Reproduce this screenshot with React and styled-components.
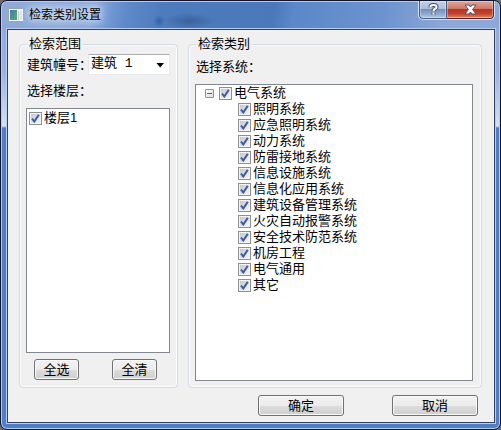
import { useState } from "react";
import styled, { createGlobalStyle } from "styled-components";

const GlobalStyle = createGlobalStyle`
  body {
    margin: 0;
    background: #6b6b70;
    font: 13px/16px "Liberation Sans", "Noto Sans CJK SC", sans-serif;
    color: #000;
  }
  * {
    box-sizing: border-box;
  }
`;

const Window = styled.main`
  min-height: 100vh;
  display: flex;
  flex-direction: column;
  padding: 0 5px 6px 6px;
  border: 1px solid #10142c;
  border-radius: 7px;
  background:
    radial-gradient(6px 6px at 158px 20px, rgba(38, 88, 160, 0.7), transparent) top / 100% 28px no-repeat,
    radial-gradient(26px 8px at 188px 20px, rgba(48, 84, 140, 0.65), transparent) top / 100% 28px no-repeat,
    linear-gradient(100deg, #8fa9d8 0, #8aa8da 90px, #5f8aca 125px, #4d7cbe 160px, #4a78b8 270px, #5b88c8 290px, #6d93cf 380px, #8ba8d8 440px, #8ba8d8 100%) top / 100% 28px no-repeat,
    linear-gradient(#8ca8d8 0, #9bb2de 70px, #d5e0f2 125px, #4f80c6 127px, #4f80c6 100%);
  box-shadow: inset 0 0 0 1px #b4cdee;
`;

const TitleBar = styled.header`
  height: 28px;
  display: flex;
  align-items: flex-start;
  justify-content: space-between;
  padding-left: 1px;
`;

const Title = styled.h1`
  display: flex;
  align-items: center;
  gap: 5px;
  height: 28px;
  margin: 0;
  font-size: 12px;
  font-weight: 400;
  text-shadow: 0 0 6px #e8effa, 0 0 10px #dde8f8, 0 0 14px #dde8f8;
`;

const WindowButtons = styled.div`
  display: flex;
  border: 1px solid #d4e2f4;
  border-top: 0;
  border-radius: 0 0 5px 5px;
  overflow: hidden;
`;

const WindowButton = styled.button`
  display: flex;
  align-items: center;
  justify-content: center;
  width: ${(p) => (p.$close ? "47px" : "28px")};
  height: 18px;
  padding: 0;
  border: 1px solid ${(p) => (p.$close ? "#5a1f26" : "#46597c")};
  border-top: 0;
  border-left-width: ${(p) => (p.$close ? "0" : "1px")};
  border-radius: ${(p) => (p.$close ? "0 0 4px 0" : "0 0 0 4px")};
  background: ${(p) =>
    p.$close
      ? "linear-gradient(#e0a79c 0, #cf7867 45%, #b73523 50%, #c2452e 75%, #dc8863 100%)"
      : "linear-gradient(#c3d2e9 0, #a9bddd 45%, #7590be 50%, #8ca7d0 75%, #b3c9e8 100%)"};
  box-shadow: inset 0 0 0 1px rgba(255, 255, 255, 0.35);
`;

const Client = styled.form`
  flex: 1;
  display: flex;
  flex-direction: column;
  padding: 6px 12px 6px 11px;
  border: 1px solid #34425f;
  background: #f0f0f0;
  box-shadow: 0 0 0 1px #b4cdee;
`;

const Groups = styled.div`
  flex: 1;
  display: grid;
  grid-template-columns: 159px 1fr;
  gap: 10px;
`;

const Group = styled.fieldset`
  display: flex;
  flex-direction: column;
  min-width: 0;
  margin: 0;
  padding: ${(p) => p.$padding};
  border: 1px solid #d0dce6;
  border-radius: 4px;
  box-shadow: inset 0 0 0 1px #fbfcfd;
`;

const Legend = styled.legend`
  margin-left: 1px;
  padding: 0 2px;
  background: #f0f0f0;
`;

const Field = styled.div`
  display: flex;
  align-items: center;
  margin-bottom: 8px;
`;

const Label = styled.label`
  width: 62px;
  padding-left: 1px;
  white-space: nowrap;
`;

const ListTitle = styled.div`
  margin-bottom: 9px;
  padding-left: 1px;
`;

const Combo = styled.div`
  position: relative;
  flex: 1;
  svg {
    position: absolute;
    right: 5px;
    top: 9px;
    pointer-events: none;
  }
`;

const Select = styled.select`
  display: block;
  width: 100%;
  height: 21px;
  padding: 0 16px 2px 2px;
  border: 1px solid #e3e9ef;
  border-top-color: #abadb3;
  border-radius: 1px;
  background: #fff;
  color: #000;
  font: 13px/16px "Liberation Mono", "Noto Sans CJK SC", monospace;
  appearance: none;
`;

const ListBox = styled.ul`
  flex: 1;
  margin: 0;
  padding: ${(p) => p.$padding};
  list-style: none;
  border: 1px solid #828790;
  background: #fff;
`;

const SubList = styled.ul`
  margin: 0;
  padding: 0 0 0 40px;
  list-style: none;
`;

const Row = styled.div`
  display: flex;
  align-items: center;
  gap: 5px;
  padding-left: 7px;
`;

const CheckLabel = styled.label`
  display: flex;
  align-items: center;
  gap: 2px;
  height: 16px;
`;

const CheckBox = styled.span`
  display: grid;
  width: 13px;
  height: 13px;
  > * {
    grid-area: 1 / 1;
  }
  svg {
    pointer-events: none;
    margin: 2px;
    visibility: hidden;
  }
  input:checked + svg {
    visibility: visible;
  }
`;

const CheckInput = styled.input`
  width: 13px;
  height: 13px;
  margin: 0;
  padding: 1px;
  border: 1px solid #8e8f8f;
  background: linear-gradient(135deg, #c4cad2, #f3f4f6) content-box, #f4f4f4;
  appearance: none;
`;

const Expander = styled.button`
  display: flex;
  align-items: center;
  justify-content: center;
  width: 9px;
  height: 9px;
  padding: 0;
  border: 1px solid #919191;
  border-radius: 1px;
  background: linear-gradient(135deg, #fff, #dcdcdc);
`;

const Button = styled.button`
  width: ${(p) => p.$width};
  height: 21px;
  padding: 0;
  border: 1px solid #707070;
  border-radius: 3px;
  background: linear-gradient(#f2f2f2 0, #ebebeb 50%, #dddddd 50%, #cfcfcf 100%);
  box-shadow: inset 0 0 0 1px #fafafa;
  color: #000;
  font: inherit;
  line-height: 16px;
`;

const ListButtons = styled.div`
  display: flex;
  justify-content: space-between;
  padding: 6px 13px 0 8px;
`;

const Footer = styled.footer`
  display: flex;
  justify-content: flex-end;
  gap: 48px;
  padding: 7px 4px 0 0;
`;

const systems = [
  "照明系统",
  "应急照明系统",
  "动力系统",
  "防雷接地系统",
  "信息设施系统",
  "信息化应用系统",
  "建筑设备管理系统",
  "火灾自动报警系统",
  "安全技术防范系统",
  "机房工程",
  "电气通用",
  "其它",
];

const questionMark =
  "M2.5 4.5 V3.5 Q2.5 2 5.5 2 Q8.5 2 8.5 4 Q8.5 5.2 6.8 6 Q5.5 6.6 5.5 8 M5.5 9.5 V11.5";

const AppIcon = () => (
  <svg width="16" height="14" viewBox="0 0 16 14" aria-hidden="true">
    <defs>
      <linearGradient id="pane" x1="0" y1="0" x2="1" y2="1">
        <stop offset="0" stopColor="#4a78b0" />
        <stop offset="1" stopColor="#4fb06c" />
      </linearGradient>
    </defs>
    <rect x="0.5" y="0.5" width="15" height="13" rx="1" fill="#f2f4f4" stroke="#9aa3ab" />
    <rect x="2" y="2" width="7" height="10" fill="url(#pane)" />
    <rect x="10" y="3" width="1" height="9" fill="#c3cdd0" />
    <rect x="12" y="3" width="2" height="9" fill="#dbe3e0" />
  </svg>
);

const Check = ({ label, checked, onChange }) => (
  <CheckLabel>
    <CheckBox>
      <CheckInput type="checkbox" checked={checked} onChange={onChange} />
      <svg width="9" height="9" viewBox="0 0 9 9" aria-hidden="true">
        <path d="M1 4.5 L3.3 7.5 L7.8 0.8" fill="none" stroke="#3d5a9c" strokeWidth="2" />
      </svg>
    </CheckBox>
    {label}
  </CheckLabel>
);

export default function App() {
  const [floor, setFloor] = useState(true);
  const [open, setOpen] = useState(true);
  const [picked, setPicked] = useState(systems);

  const toggle = (name) =>
    setPicked(
      picked.includes(name) ? picked.filter((n) => n !== name) : [...picked, name]
    );

  return (
    <>
      <GlobalStyle />
      <Window>
        <TitleBar>
          <Title>
            <AppIcon />
            检索类别设置
          </Title>
          <WindowButtons>
            <WindowButton type="button" aria-label="帮助">
              <svg width="11" height="13" viewBox="0 0 11 13">
                <path d={questionMark} fill="none" stroke="#45526b" strokeWidth="4" />
                <path d={questionMark} fill="none" stroke="#fff" strokeWidth="2" />
              </svg>
            </WindowButton>
            <WindowButton type="button" aria-label="关闭" $close>
              <svg width="13" height="11" viewBox="0 0 13 11">
                <path
                  d="M1 1 H5 L6.5 3 L8 1 H12 L8.6 5.5 L12 10 H8 L6.5 8 L5 10 H1 L4.4 5.5 Z"
                  fill="#fff"
                  stroke="#54505e"
                />
              </svg>
            </WindowButton>
          </WindowButtons>
        </TitleBar>
        <Client onSubmit={(e) => e.preventDefault()}>
          <Groups>
            <Group $padding="2px 7px 7px 6px">
              <Legend>检索范围</Legend>
              <Field>
                <Label htmlFor="building">建筑幢号：</Label>
                <Combo>
                  <Select id="building" defaultValue="1">
                    <option value="1">建筑 1</option>
                  </Select>
                  <svg width="9" height="5" viewBox="0 0 9 5" aria-hidden="true">
                    <path d="M0.5 0 H8 L4.2 4.5 Z" fill="#000" />
                  </svg>
                </Combo>
              </Field>
              <ListTitle>选择楼层：</ListTitle>
              <ListBox $padding="1px 2px">
                <li>
                  <Check label="楼层1" checked={floor} onChange={() => setFloor(!floor)} />
                </li>
              </ListBox>
              <ListButtons>
                <Button type="button" $width="45px" onClick={() => setFloor(true)}>
                  全选
                </Button>
                <Button type="button" $width="45px" onClick={() => setFloor(false)}>
                  全清
                </Button>
              </ListButtons>
            </Group>
            <Group $padding="7px 8px 6px 6px">
              <Legend>检索类别</Legend>
              <ListTitle>选择系统：</ListTitle>
              <ListBox $padding="0 2px">
                <li>
                  <Row>
                    <Expander
                      type="button"
                      aria-label="电气系统"
                      aria-expanded={open}
                      onClick={() => setOpen(!open)}
                    >
                      <svg width="7" height="7" viewBox="0 0 7 7">
                        <path d={open ? "M1 3.5 H6" : "M1 3.5 H6 M3.5 1 V6"} stroke="#3c5fb0" />
                      </svg>
                    </Expander>
                    <Check
                      label="电气系统"
                      checked={picked.length === systems.length}
                      onChange={(e) => setPicked(e.target.checked ? systems : [])}
                    />
                  </Row>
                  {open && (
                    <SubList>
                      {systems.map((name) => (
                        <li key={name}>
                          <Check
                            label={name}
                            checked={picked.includes(name)}
                            onChange={() => toggle(name)}
                          />
                        </li>
                      ))}
                    </SubList>
                  )}
                </li>
              </ListBox>
            </Group>
          </Groups>
          <Footer>
            <Button type="submit" $width="86px">确定</Button>
            <Button type="button" $width="86px">取消</Button>
          </Footer>
        </Client>
      </Window>
    </>
  );
}
